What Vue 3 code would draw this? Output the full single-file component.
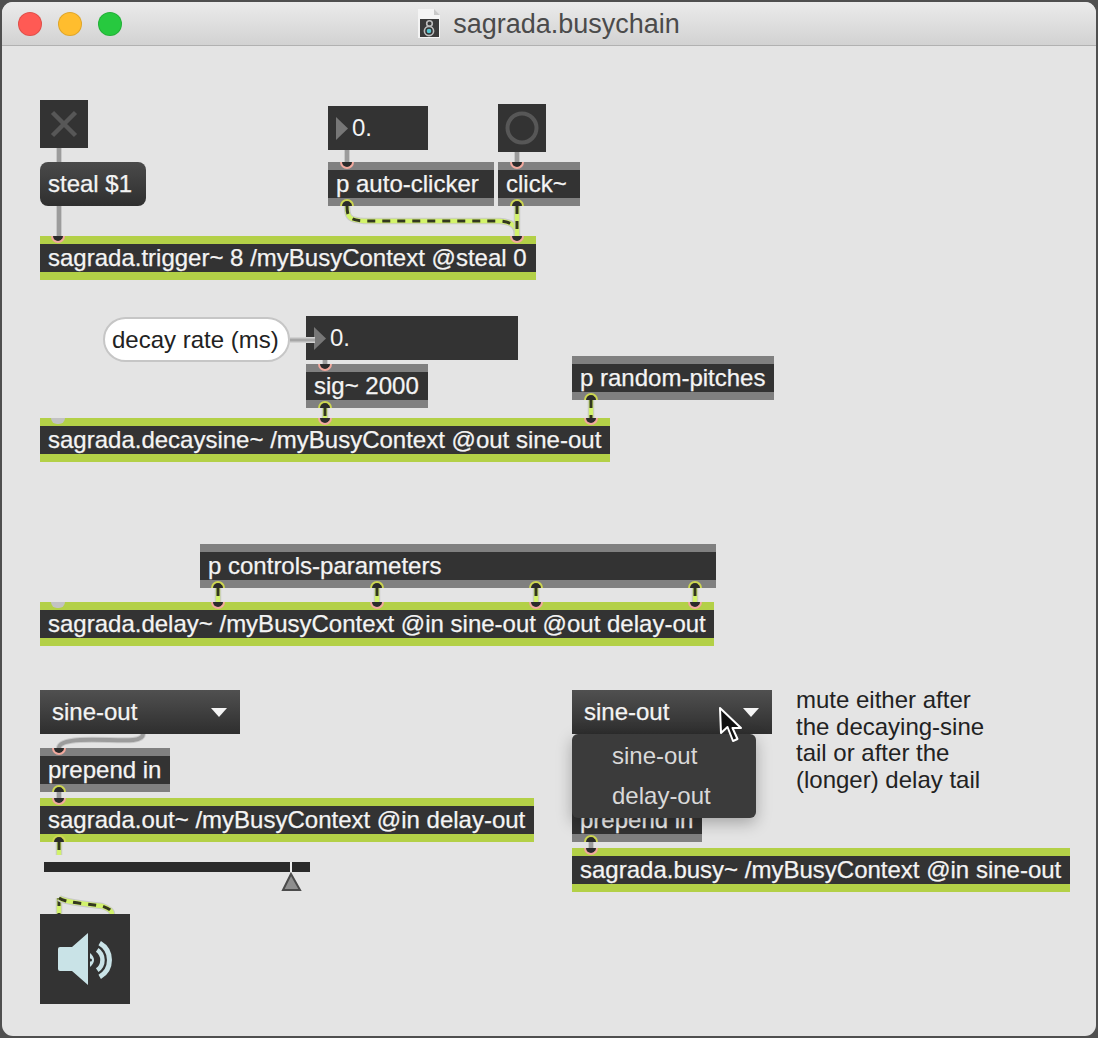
<script setup>
// patcher coordinates are window pixels, ORIGIN is where the canvas starts
const ORIGIN = { x: 2, y: 46 }

function pos(x, y, w, h) {
  return {
    left: x - ORIGIN.x + 'px',
    top: y - ORIGIN.y + 'px',
    width: w + 'px',
    height: h + 'px'
  }
}

const boxes = [
  { x: 328, y: 162, w: 166, text: 'p auto-clicker', ins: [347], outs: [347] },
  { x: 498, y: 162, w: 82, text: 'click~', ins: [517], outs: [517] },
  { x: 40, y: 236, w: 496, text: 'sagrada.trigger~ 8 /myBusyContext @steal 0', tilde: true, ins: [58, 517] },
  { x: 306, y: 364, w: 122, text: 'sig~ 2000', ins: [325], outs: [325] },
  { x: 572, y: 356, w: 202, text: 'p random-pitches', outs: [591] },
  { x: 40, y: 418, w: 570, text: 'sagrada.decaysine~ /myBusyContext @out sine-out', tilde: true, ins: [325, 591], off: [58] },
  { x: 200, y: 544, w: 516, text: 'p controls-parameters', outs: [218, 377, 536, 695] },
  { x: 40, y: 602, w: 674, text: 'sagrada.delay~ /myBusyContext @in sine-out @out delay-out', tilde: true, ins: [218, 377, 536, 695], off: [58] },
  { x: 40, y: 748, w: 130, text: 'prepend in', ins: [59], outs: [59] },
  { x: 40, y: 798, w: 494, text: 'sagrada.out~ /myBusyContext @in delay-out', tilde: true, ins: [59], outs: [59] },
  { x: 572, y: 798, w: 130, text: 'prepend in', outs: [591] },
  { x: 572, y: 848, w: 498, text: 'sagrada.busy~ /myBusyContext @in sine-out', tilde: true, ins: [591] }
]

const msgCords = [
  'M59 148 L59 162',
  'M59 206 L59 236',
  'M347 150 L347 162',
  'M517 152 L517 162',
  'M143 734 C143 745 108 738 80 740 C64 741 59 744 59 748',
  'M59 792 L59 798',
  'M591 842 L591 848',
  'M325 360 L325 364'
]

const sigCords = [
  'M347 206 C347 218 350 220 364 221 L500 221 C512 222 517 226 517 236',
  'M517 206 L517 236',
  'M325 408 L325 418',
  'M591 400 L591 418',
  'M218 588 L218 602',
  'M377 588 L377 602',
  'M536 588 L536 602',
  'M695 588 L695 602',
  'M59 842 L59 855',
  'M59 898 L59 914',
  'M59 898 C66 903 90 904 102 906 C108 908 112 910 112 914'
]
</script>

<template>
  <div class="screen">
    <div class="window">
      <header class="titlebar">
        <div class="lights">
          <span class="light red"></span>
          <span class="light yellow"></span>
          <span class="light green"></span>
        </div>
        <svg class="docicon" width="22" height="29" viewBox="0 0 22 29">
          <path d="M0 0 H16 L22 6 V29 H0 Z" fill="#f4f4f4" />
          <path d="M16 0 V6 H22 Z" fill="#c9c9c9" />
          <rect x="2" y="10" width="19" height="18" fill="#3a3a3a" />
          <circle cx="11" cy="22" r="4.6" fill="#333" stroke="#bdbdbd" stroke-width="1.6" />
          <circle cx="11" cy="22" r="2.3" fill="#58c4d0" />
          <circle cx="11.5" cy="14.5" r="2.8" fill="none" stroke="#bdbdbd" stroke-width="1.6" />
        </svg>
        <span class="title">sagrada.busychain</span>
      </header>

      <main class="patcher">
        <svg class="cords" viewBox="2 46 1094 990" width="1094" height="990">
          <g v-for="d in msgCords" :key="d" fill="none">
            <path :d="d" stroke="#c9c9c9" stroke-width="6" />
            <path :d="d" stroke="#9c9c9c" stroke-width="4" />
          </g>
          <g v-for="d in sigCords" :key="d" fill="none">
            <path :d="d" stroke="#c8c8c8" stroke-width="6.5" />
            <path :d="d" stroke="#d2f26c" stroke-width="4.5" />
            <path :d="d" stroke="#33371f" stroke-width="3" stroke-dasharray="8 7" />
          </g>
        </svg>

        <div v-for="b in boxes" :key="b.text + b.x" class="box" :class="{ tilde: b.tilde }" :style="pos(b.x, b.y, b.w, 44)">
          {{ b.text }}
          <i v-for="x in b.ins" :key="x" class="port inlet" :style="{ left: x - b.x - 7 + 'px' }"></i>
          <i v-for="x in b.outs" :key="x" class="port outlet" :style="{ left: x - b.x - 7 + 'px' }"></i>
          <i v-for="x in b.off" :key="x" class="port disabled" :style="{ left: x - b.x - 7 + 'px' }"></i>
        </div>

        <div class="control" :style="pos(40, 100, 48, 48)">
          <svg width="48" height="48" viewBox="0 0 48 48">
            <path d="M12.5 12.5 L35.5 35.5 M35.5 12.5 L12.5 35.5" stroke="#575757" stroke-width="4.5" />
          </svg>
        </div>
        <div class="control" :style="pos(498, 104, 48, 48)">
          <svg width="48" height="48" viewBox="0 0 48 48">
            <circle cx="24" cy="24" r="14.5" fill="none" stroke="#575757" stroke-width="4" />
          </svg>
        </div>

        <div class="message" :style="pos(40, 162, 106, 44)">steal $1</div>

        <div class="control number" :style="pos(328, 106, 100, 44)">
          <svg width="12" height="23" viewBox="0 0 12 23"><path d="M0 0 L12 11.5 L0 23 Z" fill="#777" /></svg>
          <span>0.</span>
        </div>
        <div class="control number" :style="pos(306, 316, 212, 44)">
          <svg width="12" height="23" viewBox="0 0 12 23"><path d="M0 0 L12 11.5 L0 23 Z" fill="#777" /></svg>
          <span>0.</span>
        </div>

        <div class="bubble" :style="pos(103, 317, 187, 45)">decay rate (ms)</div>
        <svg class="stub" :style="pos(290, 336, 25, 8)" viewBox="0 0 25 8">
          <path d="M0 4 H25" stroke="#d2d2d2" stroke-width="6" />
          <path d="M0 4 H25" stroke="#a6a6a6" stroke-width="3" />
        </svg>

        <div class="umenu" :style="pos(40, 690, 200, 44)">
          <span>sine-out</span>
          <i class="caret"></i>
        </div>
        <div class="umenu" :style="pos(572, 690, 200, 44)">
          <span>sine-out</span>
          <i class="caret"></i>
        </div>

        <ul class="popup" :style="pos(572, 734, 184, 84)">
          <li>sine-out</li>
          <li>delay-out</li>
        </ul>

        <p class="comment" :style="pos(796, 687, 260, 108)">
          mute either after<br>the decaying-sine<br>tail or after the<br>(longer) delay tail
        </p>

        <div class="slider" :style="pos(44, 862, 266, 30)">
          <svg width="266" height="30" viewBox="0 0 266 30">
            <rect x="0" y="0" width="266" height="10" fill="#2a2a2a" />
            <rect x="246" y="0" width="2" height="11" fill="#f0f0f0" />
            <path d="M247 12 L256 28 H239 Z" fill="#8f8f8f" stroke="#4b4b4b" stroke-width="2" />
          </svg>
        </div>

        <div class="control" :style="pos(40, 914, 90, 90)">
          <svg width="90" height="90" viewBox="0 0 90 90">
            <path d="M20 33 H32 L48 19 V71 L32 57 H20 Q18 57 18 55 V35 Q18 33 20 33 Z" fill="#c9e3e7" />
            <path d="M50 39 Q58 46 50 53 Z" fill="#c9e3e7" />
            <circle cx="50.5" cy="46" r="1.5" fill="#333" />
            <path d="M57.2 35.8 A12.5 12.5 0 0 1 57.2 56.2" fill="none" stroke="#c9e3e7" stroke-width="4.5" />
            <path d="M59.7 29.1 A19.5 19.5 0 0 1 59.7 62.9" fill="none" stroke="#c9e3e7" stroke-width="5" />
          </svg>
        </div>

        <svg class="pointer" :style="pos(718, 706, 26, 38)" viewBox="0 0 26 38">
          <path d="M2 2 L3 27 L9.5 21 L15 35 L19.5 33 L14.5 22 L23 22 Z" fill="#111" stroke="#fff" stroke-width="2" stroke-linejoin="round" />
        </svg>
      </main>
    </div>
  </div>
</template>

<style scoped>
.screen {
  width: 1098px;
  height: 1038px;
  padding: 2px;
  box-sizing: border-box;
  background: #4f4f4f;
  font-family: "Liberation Sans", Arial, sans-serif;
}

.window {
  height: 100%;
  display: flex;
  flex-direction: column;
  border-radius: 11px;
  overflow: hidden;
  background: #e4e4e4;
}

.titlebar {
  position: relative;
  flex: none;
  height: 43px;
  display: flex;
  align-items: center;
  justify-content: center;
  gap: 13px;
  background: linear-gradient(#ebebeb, #d2d2d2);
  border-bottom: 1px solid #b1b1b1;
}

.lights {
  position: absolute;
  left: 16px;
  top: 10px;
  display: flex;
  gap: 16px;
}

.light {
  width: 22px;
  height: 22px;
  border-radius: 50%;
  border: 1px solid rgba(0, 0, 0, .12);
}
.red { background: #ff5a54; }
.yellow { background: #ffbd2e; }
.green { background: #27c93f; }

.docicon {
  flex: none;
}

.title {
  font-size: 27px;
  color: #4b4b4b;
  padding-top: 2px;
}

.patcher {
  position: relative;
  flex: 1;
}

.cords {
  position: absolute;
  left: 0;
  top: 0;
}

.box {
  position: absolute;
  box-sizing: border-box;
  border-top: 8px solid #808080;
  border-bottom: 8px solid #808080;
  background: #333;
  color: #f4f4f4;
  font-size: 24px;
  line-height: 27px;
  padding-left: 8px;
  white-space: nowrap;
  -webkit-text-stroke: .25px #f4f4f4;
}

.tilde {
  border-color: #b3d047;
}

.port {
  position: absolute;
  width: 14px;
  height: 7px;
  box-sizing: border-box;
  background: #2b2b2b;
}

.inlet {
  top: -8px;
  border: 2px solid #f2a99e;
  border-top: none;
  border-radius: 0 0 7px 7px;
}

.outlet {
  bottom: -8px;
  border: 2px solid #cdd651;
  border-bottom: none;
  border-radius: 7px 7px 0 0;
}

.disabled {
  top: -8px;
  height: 6px;
  background: #c2c2c2;
  border-radius: 0 0 7px 7px;
}

.control {
  position: absolute;
  background: #333;
}

.control svg {
  display: block;
}

.number {
  display: flex;
  align-items: center;
  gap: 4px;
  padding-left: 8px;
  box-sizing: border-box;
  color: #f4f4f4;
  font-size: 24px;
}

.message {
  position: absolute;
  box-sizing: border-box;
  border-radius: 8px;
  background: linear-gradient(#4a4a4a, #2f2f2f);
  color: #f4f4f4;
  font-size: 24px;
  line-height: 44px;
  padding-left: 8px;
  -webkit-text-stroke: .25px #f4f4f4;
}

.bubble {
  position: absolute;
  box-sizing: border-box;
  background: #fff;
  border: 2px solid #c6c6c6;
  border-radius: 23px;
  color: #222;
  font-size: 24px;
  line-height: 41px;
  padding-left: 7px;
  white-space: nowrap;
}

.stub {
  position: absolute;
}

.umenu {
  position: absolute;
  display: flex;
  align-items: center;
  justify-content: space-between;
  box-sizing: border-box;
  padding: 0 13px 0 12px;
  background: linear-gradient(#505050, #2e2e2e);
  color: #f4f4f4;
  font-size: 24px;
  -webkit-text-stroke: .25px #f4f4f4;
}

.caret {
  width: 0;
  height: 0;
  border-left: 8.5px solid transparent;
  border-right: 8.5px solid transparent;
  border-top: 9px solid #f4f4f4;
}

.popup {
  position: absolute;
  margin: 0;
  padding: 2px 0;
  box-sizing: border-box;
  list-style: none;
  background: #3b3b3b;
  border-radius: 6px;
  box-shadow: 0 5px 16px rgba(0, 0, 0, .28);
  color: #d9d9d9;
  font-size: 24px;
}

.popup li {
  height: 40px;
  line-height: 40px;
  padding-left: 40px;
}

.comment {
  position: absolute;
  margin: 0;
  color: #222;
  font-size: 24px;
  line-height: 26.6px;
  white-space: nowrap;
}

.slider {
  position: absolute;
}

.slider svg {
  display: block;
}

.pointer {
  position: absolute;
}
</style>

<style>
html, body {
  margin: 0;
  background: #4f4f4f;
}
</style>
